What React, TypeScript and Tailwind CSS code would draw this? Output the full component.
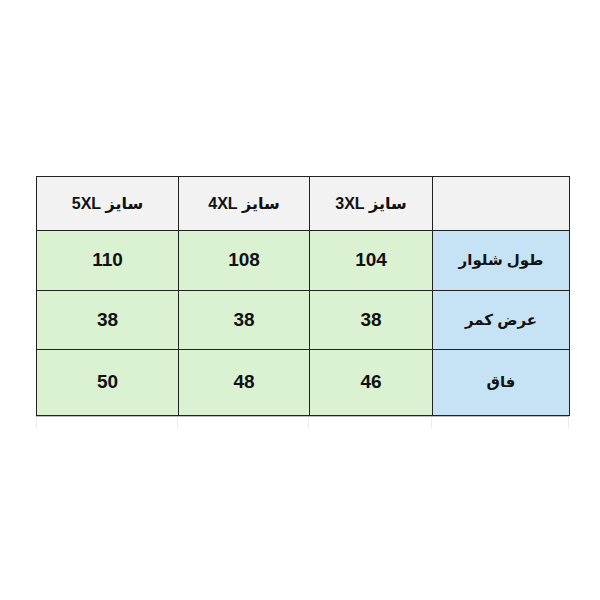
import React from 'react'

const cols = ['w-[142px]', 'w-[131px]', 'w-[123px]', 'w-[137px]']

const header = ['سایز 5XL', 'سایز 4XL', 'سایز 3XL', '']

const rows = [
  { label: 'طول شلوار', values: ['110', '108', '104'], h: 'h-[60px]' },
  { label: 'عرض کمر', values: ['38', '38', '38'], h: 'h-[59px]' },
  { label: 'فاق', values: ['50', '48', '46'], h: 'h-[66px]' },
]

const App: React.FC = () => {
  return (
    <div
      className="w-[600px] h-[600px] bg-white pt-[176px] pl-[36px]"
      style={{ fontFamily: '"Liberation Sans", "DejaVu Sans", sans-serif' }}
    >
      <table className="border-collapse font-bold text-[#111]">
        <tbody>
          {/* Header */}
          <tr className="h-[54px] bg-[#f2f2f2] text-[16px]">
            {header.map((text, i) => (
              <td key={i} className={`${cols[i]} border border-[#222] text-center align-middle p-0`}>
                <span dir="rtl">{text}</span>
              </td>
            ))}
          </tr>

          {rows.map((row) => (
            <tr key={row.label} className={row.h}>
              {row.values.map((v, i) => (
                <td key={i} className={`${cols[i]} border border-[#222] bg-[#dbf2d2] text-center align-middle p-0 text-[19px]`}>
                  {v}
                </td>
              ))}
              <td className={`${cols[3]} border border-[#222] bg-[#c5e3f5] text-center align-middle p-0 text-[15px]`}>
                <span dir="rtl">{row.label}</span>
              </td>
            </tr>
          ))}
        </tbody>
      </table>

      {/* faint sheet gridlines under the table */}
      <div className="flex h-[12px] w-[533px] border-t border-[#bbb]">
        <div className="w-[142px] border-l border-r border-[#ececec]" />
        <div className="w-[131px] border-r border-[#ececec]" />
        <div className="w-[123px] border-r border-[#ececec]" />
        <div className="w-[137px] border-r border-[#ececec]" />
      </div>
    </div>
  )
}

export default App
